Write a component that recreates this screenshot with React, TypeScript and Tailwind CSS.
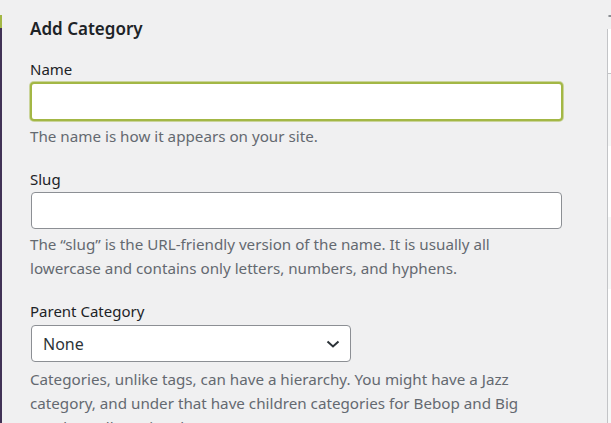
export default function App() {
  const font = { fontFamily: '"Noto Sans", "Open Sans", sans-serif' };
  return (
    <div className="flex h-[423px] w-[611px] overflow-hidden bg-[#f0f0f1] text-[#1d2327]" style={font}>
      <div className="flex w-[2px] shrink-0 flex-col">
        <div className="h-[15px] bg-[#f0f0f1]" />
        <div className="h-[13px] bg-[#a3b745]" />
        <div className="flex-1 bg-[#413256]" />
      </div>
      <div className="flex flex-1 pl-[28px]">
        <div className="w-[535px] shrink-0">
          <h2 className="mt-[17px] text-[17px] font-semibold leading-[24px]">Add Category</h2>
          <div className="mt-[18px] text-[15px] leading-[20px]">Name</div>
          <input
            type="text"
            className="mt-[3px] box-border block h-[39px] w-[533px] rounded-[4px] border-2 border-[#a3b745] bg-white shadow-[0_0_0_1px_#a3b74580] outline-none"
          />
          <p className="mt-[3px] text-[15.2px] leading-[24px] text-[#646970]">The name is how it appears on your site.</p>
          <div className="mt-[21px] text-[15px] leading-[20px]">Slug</div>
          <input
            type="text"
            className="mt-[3px] ml-[1px] box-border block h-[37px] w-[531px] rounded-[4px] border border-[#8c8f94] bg-white outline-none"
          />
          <p className="mt-[3px] w-[533px] text-[15.2px] leading-[24px] text-[#646970]">
            The “slug” is the URL-friendly version of the name. It is usually all lowercase and contains only letters, numbers, and hyphens.
          </p>
          <div className="mt-[21px] text-[15px] leading-[20px]">Parent Category</div>
          <div className="mt-[4px] ml-[1px] box-border flex h-[37px] w-[320px] items-center justify-between rounded-[4px] border border-[#8c8f94] bg-white pl-[11px] pr-[9px]">
            <span className="text-[16px] text-[#2c3338]">None</span>
            <svg width="16" height="16" viewBox="0 0 16 16" fill="none">
              <path d="M2.5 5.5 L8 10.5 L13.5 5.5" stroke="#2c3338" strokeWidth="2" />
            </svg>
          </div>
          <p className="mt-[5px] w-[533px] text-[15.2px] leading-[24px] text-[#646970]">
            Categories, unlike tags, can have a hierarchy. You might have a Jazz category, and under that have children categories for Bebop and Big Band. Totally optional.
          </p>
        </div>
        <div className="ml-[42px] flex flex-1 flex-col">
          <div className="mt-[15px] ml-[1px] box-border h-[38px] w-[40px] rounded-[4px] border border-[#8c8f94] bg-white" />
          <div className="mt-[12px] flex w-[40px] flex-col border-l border-[#c3c4c7]">
            <div className="h-[45px] border-b border-[#c3c4c7] bg-white" />
            <div className="h-[72px] bg-[#f6f7f7]" />
            <div className="h-[71px] bg-white" />
            <div className="h-[72px] bg-[#f6f7f7]" />
            <div className="h-[71px] bg-white" />
            <div className="h-[72px] bg-[#f6f7f7]" />
          </div>
        </div>
      </div>
    </div>
  );
}
